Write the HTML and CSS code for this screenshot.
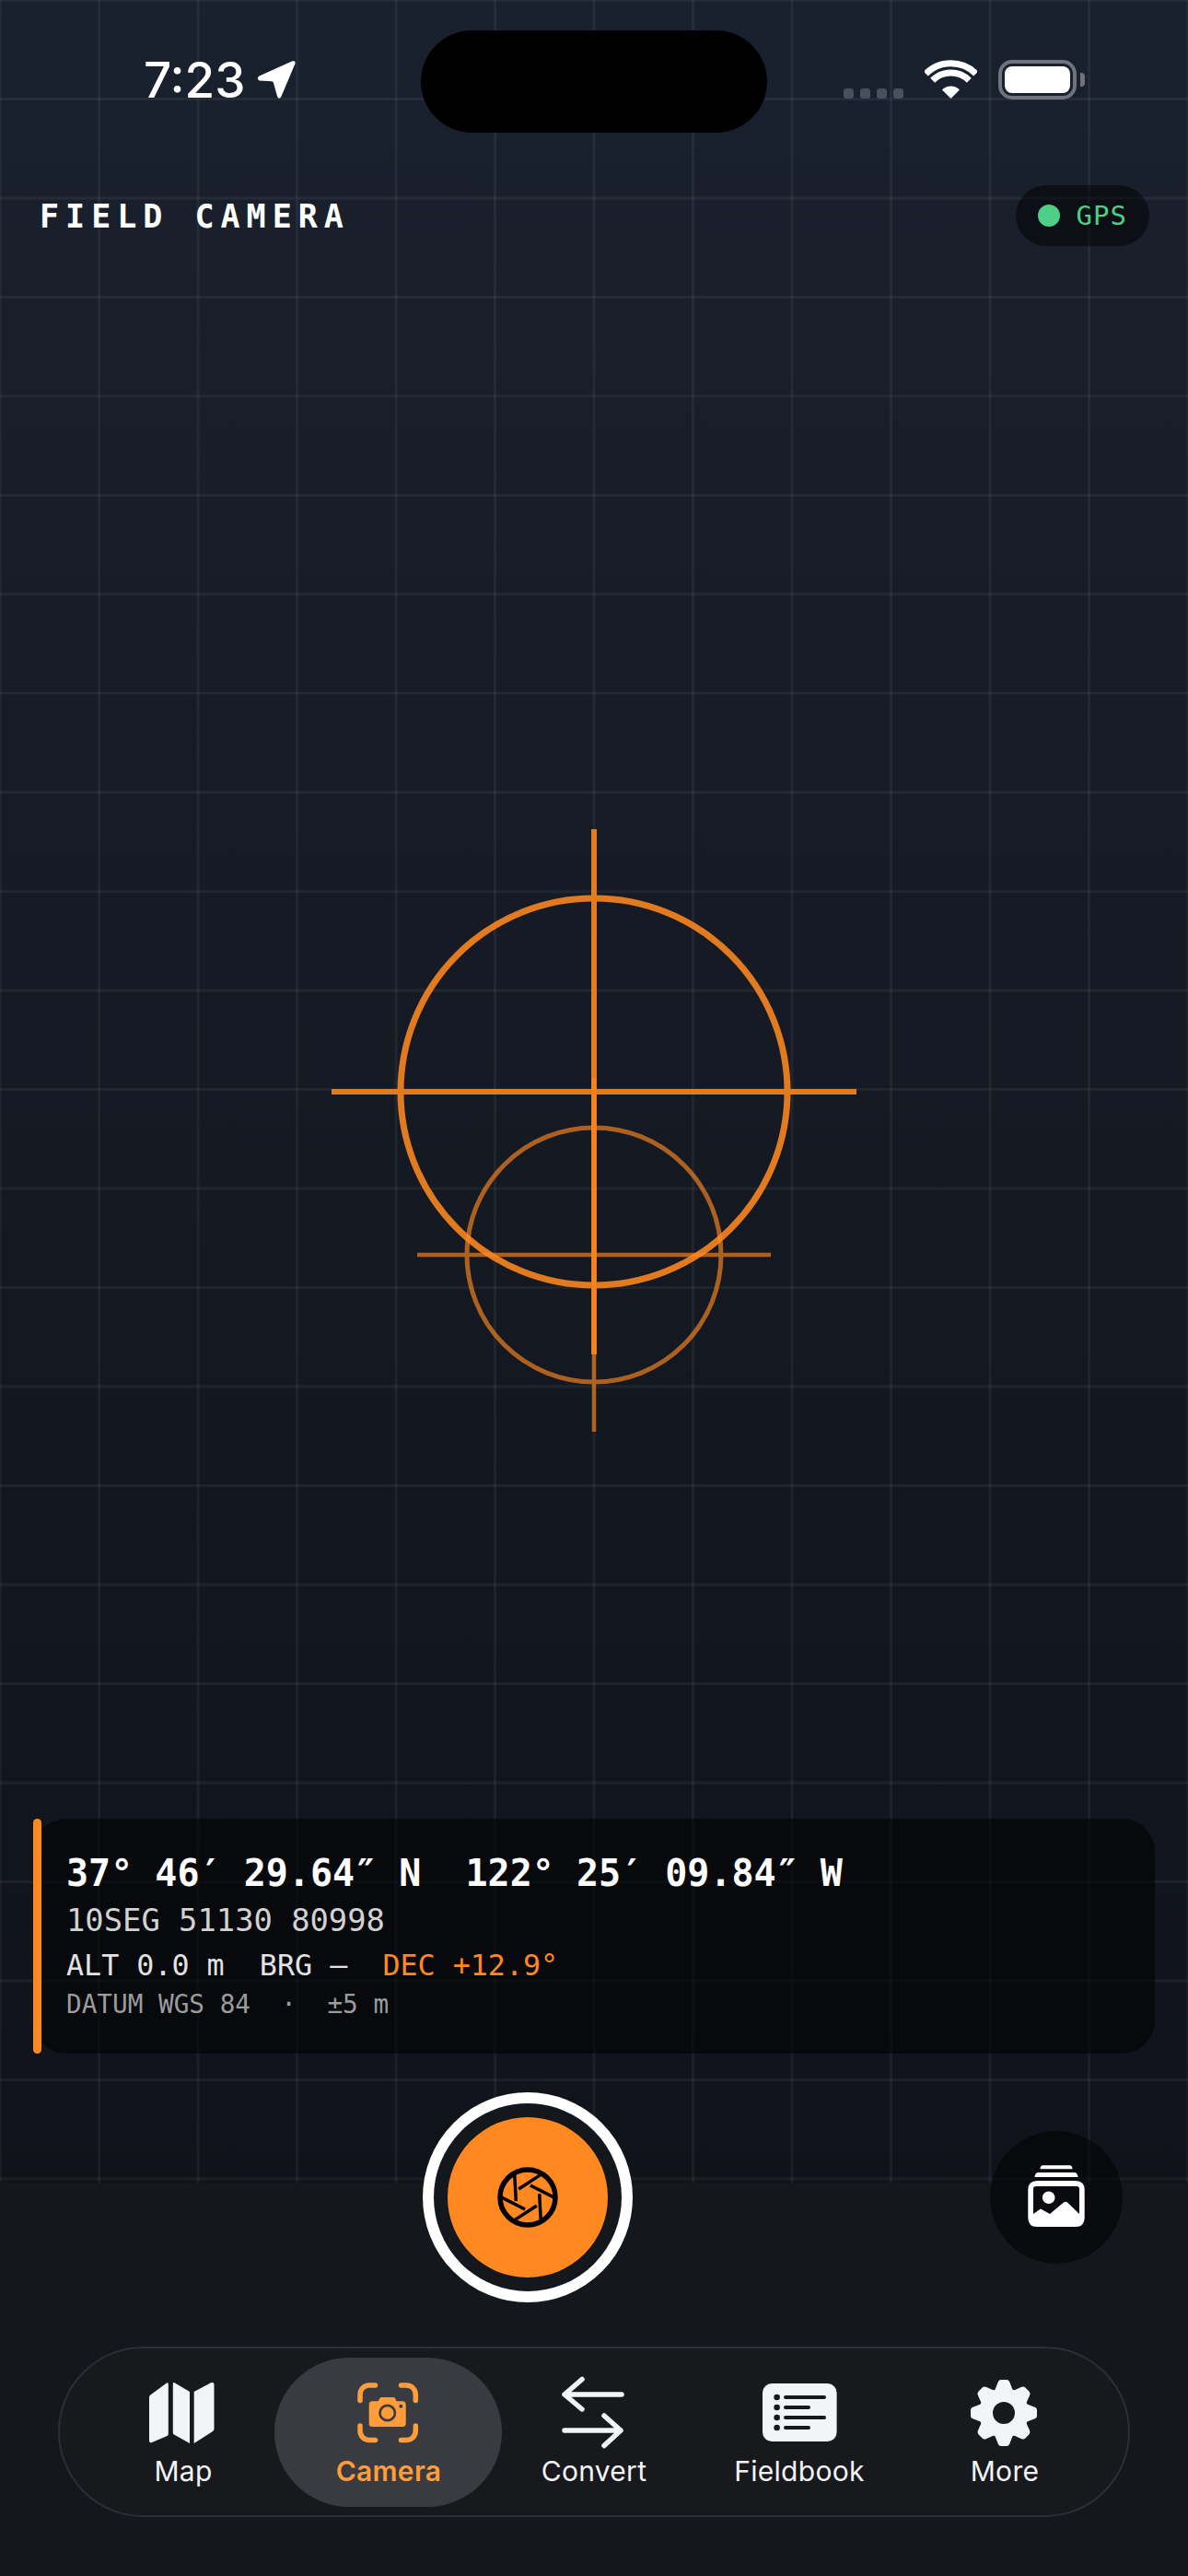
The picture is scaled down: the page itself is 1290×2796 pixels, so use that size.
FILE: index.html
```html
<!DOCTYPE html>
<html lang="en">
<head>
  <meta charset="UTF-8">
  <title>Field Camera</title>
  <meta name="viewport" content="width=device-width, initial-scale=1.0">
  <link rel="stylesheet" href="styles.css">
</head>
<body>
  <div class="screen">

    <div class="status">
      <div class="status-left">
        <span class="time">7:23</span>
        <svg class="loc-arrow" width="44" height="44" viewBox="0 0 44 44">
          <path d="M3.5 17.5 L39 1.6 Q43.5 0 42.3 4.4 L27.5 39.5 Q25 44 23 39.5 L19 25 Q18.5 23.4 17 23.2 L3.5 22.5 Q0 20 3.5 17.5 Z" fill="#fff"/>
        </svg>
      </div>
      <div class="island"></div>
      <div class="status-right">
        <div class="cells"><i></i><i></i><i></i><i></i></div>
        <svg width="57" height="42" viewBox="0 0 57 42" fill="none" stroke="#fff" stroke-width="7">
          <path d="M1.3 15 A38.5 38.5 0 0 1 55.7 15"/>
          <path d="M8.7 22.2 A28 28 0 0 1 48.3 22.2"/>
          <path d="M28.5 42 L19 32.5 A13.4 13.4 0 0 1 38 32.5 Z" fill="#fff" stroke="none"/>
        </svg>
        <div class="battery"><div class="battery-fill"></div></div>
      </div>
    </div>

    <div class="header">
      <div class="app-title">FIELD CAMERA</div>
      <div class="gps-pill"><span class="gps-dot"></span><span>GPS</span></div>
    </div>

    
    <svg class="reticle" width="570" height="654" viewBox="360 900 570 654" fill="none" stroke="#ff8820">
      <g opacity="0.65">
        <circle cx="645" cy="1362" r="138" stroke-width="5"/>
        <path d="M453 1362 H837 M645 1170 V1554" stroke-width="4.5"/>
      </g>
      <g opacity="0.88">
        <circle cx="645" cy="1185" r="210" stroke-width="7"/>
        <path d="M360 1185 H930 M645 900 V1470" stroke-width="6"/>
      </g>
    </svg>

    <div class="readout">
      <div class="readout-bar"></div>
      <div class="readout-card">
        <div class="coords">37° 46′ 29.64″ N  122° 25′ 09.84″ W</div>
        <div class="mgrs">10SEG 51130 80998</div>
        <div class="alt">ALT 0.0 m  BRG —  <span class="dec">DEC +12.9°</span></div>
        <div class="datum">DATUM WGS 84  ·  ±5 m</div>
      </div>
    </div>

    <div class="controls">
      <button class="shutter">
        <span class="shutter-core">
          <svg width="66" height="66" viewBox="-33 -33 66 66" fill="none" stroke="#000">
            <circle r="30" stroke-width="5.5"/>
            <g stroke-width="3.5">
              <path d="M-14.3 -26 L-12.7 4"/>
              <path d="M-14.3 -26 L-12.7 4" transform="rotate(60)"/>
              <path d="M-14.3 -26 L-12.7 4" transform="rotate(120)"/>
              <path d="M-14.3 -26 L-12.7 4" transform="rotate(180)"/>
              <path d="M-14.3 -26 L-12.7 4" transform="rotate(240)"/>
              <path d="M-14.3 -26 L-12.7 4" transform="rotate(300)"/>
            </g>
          </svg>
        </span>
      </button>
      <button class="gallery">
        <svg width="80" height="80" viewBox="0 3 80 80" fill="#fff">
          <path d="M25 8.2 H55 Q57 8.2 57.6 12.2 H22.4 Q23 8.2 25 8.2 Z"/>
          <path d="M20 16 H60 Q63 16.5 63.6 21 H16.4 Q17 16.5 20 16 Z"/>
          <path fill-rule="evenodd" d="M19.3 25 H60.7 Q70.7 25 70.7 35 V65 Q70.7 75 60.7 75 H19.3 Q9.3 75 9.3 65 V35 Q9.3 25 19.3 25 Z M18 31 Q15 31 15 34 V61 L23 55.5 L33 61 L48 48.5 Q50 47 52 48.5 L65 61 V34 Q65 31 62 31 Z"/>
          <circle cx="31.7" cy="43.3" r="6.8"/>
        </svg>
      </button>
    </div>

    <nav class="tabbar">
      <div class="tab">
        <svg class="tab-icon" width="84" height="84" viewBox="0 0 84 84" fill="#f3f4f8">
          <path d="M5 24 Q5 22 7 21 L24 8.5 Q25.8 7.6 25.8 10 V64 Q25.8 65 24.5 66 L8 73 Q5 74 5 71 Z"/>
          <path d="M30.8 9.5 Q30.8 7.2 32.5 8.3 L49 18 V74 L32 64.5 Q30.8 64 30.8 62.5 Z"/>
          <path d="M53.7 18 L72 8.3 Q75.5 7 75.5 10 V58 Q75.5 60 74 61 L53.7 74 Z"/>
        </svg>
        <span class="tab-label">Map</span>
      </div>
      <div class="tab active">
        <svg class="tab-icon" width="84" height="84" viewBox="0 0 84 84">
          <path d="M27.5 11 H21 A10 10 0 0 0 11 21 V27.5 M55.5 11 H61.3 A10 10 0 0 1 71.3 21 V27.5 M11 55 V60.6 A10 10 0 0 0 21 70.6 H27.5 M71.3 55 V60.6 A10 10 0 0 1 61.3 70.6 H55.5" fill="none" stroke="#ff9d3a" stroke-width="5.5" stroke-linecap="round"/>
          <path d="M24.5 28.3 H30.7 L32.5 25 Q33 24 34.5 24 H47 Q48.5 24 49 25 L50.5 28.3 H57 Q60.7 28.3 60.7 32 V52.5 Q60.7 56 57 56 H24.5 Q20.7 56 20.7 52.5 V32 Q20.7 28.3 24.5 28.3 Z" fill="#ff9d3a"/>
          <circle cx="40.7" cy="41" r="8.2" fill="#ff9d3a" stroke="#3a3b40" stroke-width="2.7"/>
          <circle cx="55.3" cy="33.7" r="2" fill="#3a3b40"/>
        </svg>
        <span class="tab-label">Camera</span>
      </div>
      <div class="tab">
        <svg class="tab-icon" width="84" height="84" viewBox="0 0 84 84" fill="none" stroke="#f3f4f8" stroke-width="5.5" stroke-linecap="round" stroke-linejoin="round">
          <path d="M10 21 H72 M29 4.5 L10 21 L29 37"/>
          <path d="M10 60 H71 M53 44 L71 60 L53 76.5"/>
        </svg>
        <span class="tab-label">Convert</span>
      </div>
      <div class="tab">
        <svg class="tab-icon" width="84" height="84" viewBox="0 0 84 84">
          <rect x="2" y="9" width="80.6" height="63" rx="10" fill="#f3f4f8"/>
          <g fill="#18191d">
            <circle cx="17.6" cy="24" r="3.3"/>
            <circle cx="17.6" cy="35" r="3.3"/>
            <circle cx="17.6" cy="46" r="3.3"/>
            <circle cx="17.6" cy="57" r="3.3"/>
          </g>
          <path d="M27 24 H69 M27 35 H52 M27 46 H69 M27 57 H52" stroke="#18191d" stroke-width="4" stroke-linecap="round"/>
        </svg>
        <span class="tab-label">Fieldbook</span>
      </div>
      <div class="tab">
        <svg class="tab-icon" width="84" height="84" viewBox="-41 -41 84 84" fill="#f3f4f8">
          <circle r="19.5" fill="none" stroke="#f3f4f8" stroke-width="15"/>
          <path d="M-10 -24 L-6.5 -33 Q-5.5 -36 -3 -36 H3 Q5.5 -36 6.5 -33 L10 -24 Z"/>
          <path d="M-10 -24 L-6.5 -33 Q-5.5 -36 -3 -36 H3 Q5.5 -36 6.5 -33 L10 -24 Z" transform="rotate(45)"/>
          <path d="M-10 -24 L-6.5 -33 Q-5.5 -36 -3 -36 H3 Q5.5 -36 6.5 -33 L10 -24 Z" transform="rotate(90)"/>
          <path d="M-10 -24 L-6.5 -33 Q-5.5 -36 -3 -36 H3 Q5.5 -36 6.5 -33 L10 -24 Z" transform="rotate(135)"/>
          <path d="M-10 -24 L-6.5 -33 Q-5.5 -36 -3 -36 H3 Q5.5 -36 6.5 -33 L10 -24 Z" transform="rotate(180)"/>
          <path d="M-10 -24 L-6.5 -33 Q-5.5 -36 -3 -36 H3 Q5.5 -36 6.5 -33 L10 -24 Z" transform="rotate(225)"/>
          <path d="M-10 -24 L-6.5 -33 Q-5.5 -36 -3 -36 H3 Q5.5 -36 6.5 -33 L10 -24 Z" transform="rotate(270)"/>
          <path d="M-10 -24 L-6.5 -33 Q-5.5 -36 -3 -36 H3 Q5.5 -36 6.5 -33 L10 -24 Z" transform="rotate(315)"/>
        </svg>
        <span class="tab-label">More</span>
      </div>
    </nav>

  </div>
</body>
</html>
```

FILE: styles.css
```css
* {
  box-sizing: border-box;
}

body {
  margin: 0;
  background: #14171c;
  color: #fff;
  font-family: Inter, "Noto Sans", sans-serif;
}

button {
  border: none;
  padding: 0;
}

.screen {
  position: relative;
  width: 1290px;
  height: 2796px;
  overflow: hidden;
  isolation: isolate;
}

/* grid backdrop stops just under the shutter's centre */
.screen::before {
  content: "";
  position: absolute;
  top: 0;
  left: 0;
  width: 100%;
  height: 2369px;
  z-index: -1;
  background:
    linear-gradient(to right, rgba(255,255,255,0.05) 3px, transparent 3px) -1.5px 0 / 107.5px 107.5px,
    linear-gradient(to bottom, rgba(255,255,255,0.05) 3px, transparent 3px) 0 -1.5px / 107.5px 107.5px,
    linear-gradient(to bottom, #1a212e, #151a24 45%, #10131a);
}

.status {
  display: flex;
  align-items: flex-end;
  padding-top: 33px;
}

.status-left {
  display: flex;
  align-items: flex-end;
  width: 457px;
  height: 75px;
  padding-left: 156px;
  gap: 12px;
}

.time {
  font-size: 53px;
  font-weight: 500;
  line-height: 1;
  margin-bottom: -6px;
}

.loc-arrow {
  margin-bottom: -1px;
}

.island {
  width: 376px;
  height: 111px;
  margin-bottom: -36px;
  background: #000;
  border-radius: 56px;
}

.status-right {
  display: flex;
  align-items: flex-end;
  gap: 23px;
  height: 75px;
  padding-left: 83px;
}

.cells {
  display: flex;
  gap: 7px;
  margin-bottom: 1px;
}

.cells i {
  width: 11px;
  height: 11px;
  border-radius: 3px;
  background: #4a505b;
}

.status-right svg {
  margin-bottom: 1px;
}

.battery {
  position: relative;
  width: 85px;
  height: 43px;
  padding: 3px;
  border: 4px solid #6f737b;
  border-radius: 15px;
}

.battery::after {
  content: "";
  position: absolute;
  top: 10px;
  right: -13px;
  width: 5px;
  height: 15px;
  border-radius: 0 4px 4px 0;
  background: #6f737b;
}

.battery-fill {
  height: 100%;
  border-radius: 8px;
  background: #fff;
}

.header {
  display: flex;
  justify-content: space-between;
  align-items: center;
  height: 66px;
  margin-top: 93px;
  padding: 0 42px 0 43px;
}

.app-title {
  padding-top: 2px;
  font-family: "DejaVu Sans Mono", monospace;
  font-size: 35px;
  font-weight: 700;
  letter-spacing: 7px;
}

.gps-pill {
  display: flex;
  align-items: center;
  gap: 18px;
  height: 66px;
  padding: 0 24px;
  border-radius: 33px;
  background: rgba(0,0,0,0.5);
  color: #4ecf87;
  font-family: "DejaVu Sans Mono", monospace;
  font-size: 29px;
  letter-spacing: 1px;
}

.gps-dot {
  width: 24px;
  height: 24px;
  border-radius: 50%;
  background: #4ecf87;
}

.reticle {
  display: block;
  margin: 633px auto 0;
}

.readout {
  display: flex;
  width: 1218px;
  height: 255px;
  margin: 420px 0 0 36px;
}

.readout-bar {
  position: relative;
  z-index: 1;
  width: 9px;
  border-radius: 5px;
  background: #ff8820;
}

.readout-card {
  flex: 1;
  margin-left: -9px;
  padding: 34px 0 0 36px;
  border-radius: 36px;
  background: rgba(0,0,0,0.55);
  font-family: "DejaVu Sans Mono", monospace;
}

.readout-card div {
  white-space: pre;
}

.coords {
  font-size: 40px;
  font-weight: 700;
  line-height: 50px;
}

.mgrs {
  font-size: 33.8px;
  line-height: 54px;
  color: #d2d2d2;
}

.alt {
  font-size: 31.7px;
  line-height: 42px;
  color: #e2e2e2;
}

.dec {
  color: #ff8820;
}

.datum {
  font-size: 27.7px;
  line-height: 44px;
  color: #9c9c9c;
}

.controls {
  display: flex;
  align-items: center;
  margin-top: 42px;
  padding: 0 71px 0 459px;
}

.shutter {
  display: flex;
  align-items: center;
  justify-content: center;
  width: 228px;
  height: 228px;
  border: 12px solid #fff;
  border-radius: 50%;
  background: #14181d;
}

.shutter-core {
  display: flex;
  align-items: center;
  justify-content: center;
  width: 174px;
  height: 174px;
  border-radius: 50%;
  background: #ff8820;
}

.gallery {
  display: flex;
  align-items: center;
  justify-content: center;
  width: 144px;
  height: 144px;
  margin-left: auto;
  border-radius: 50%;
  background: rgba(0,0,0,0.5);
}

.tabbar {
  display: grid;
  grid-template-columns: repeat(5, 223px);
  width: 1164px;
  height: 185px;
  margin: 48px 0 0 63px;
  padding: 29px 22.5px 0;
  border: 2px solid #2c3036;
  border-radius: 93px;
  background: #18191d;
  isolation: isolate;
}

.tab {
  position: relative;
  display: flex;
  flex-direction: column;
  align-items: center;
}

.tab.active::before {
  content: "";
  position: absolute;
  top: -19px;
  left: -13px;
  right: -11px;
  height: 162px;
  z-index: -1;
  border-radius: 81px;
  background: #3a3b40;
}

.tab-icon {
  display: block;
}

.tab-label {
  margin-top: 2px;
  font-size: 30px;
  line-height: 36px;
  letter-spacing: 0.3px;
  color: #f3f4f8;
}

.tab.active .tab-label {
  font-weight: 600;
  color: #ff9d3a;
}
```
